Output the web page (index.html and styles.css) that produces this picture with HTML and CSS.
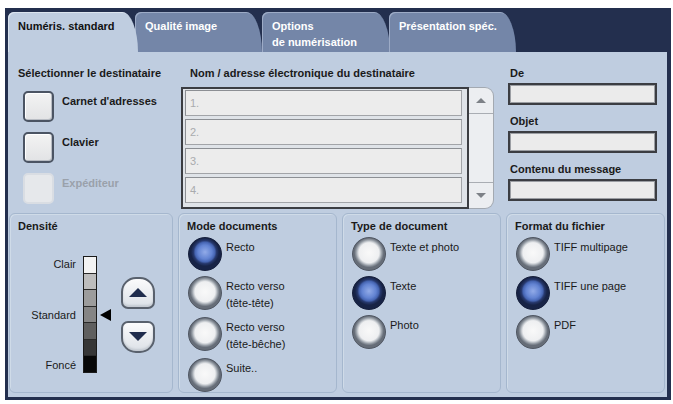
FILE: index.html
```html
<!DOCTYPE html>
<html lang="fr">
	<head>
		<meta charset="UTF-8">
		<title>Numérisation</title>
		<link rel="stylesheet" href="styles.css">
	</head>
	<body>
		<div class="frame">
			<div class="tabs">
				<div class="tab tab-active">Numéris. standard</div>
				<div class="tab tab-2">Qualité image</div>
				<div class="tab tab-3">Options<br>de numérisation</div>
				<div class="tab tab-4">Présentation spéc.</div>
			</div>
			<div class="panel">
				<div class="top">
					<div class="dest-col">
						<div class="label">Sélectionner le destinataire</div>
						<div class="dest-list">
							<div class="dest-btn">
								<span class="square"></span>
								<span class="dest-text">Carnet d'adresses</span>
							</div>
							<div class="dest-btn">
								<span class="square"></span>
								<span class="dest-text">Clavier</span>
							</div>
							<div class="dest-btn disabled">
								<span class="square"></span>
								<span class="dest-text">Expéditeur</span>
							</div>
						</div>
					</div>
					<div class="recip-col">
						<div class="label recip-title">Nom / adresse électronique du destinataire</div>
						<div class="recip-box">
							<div class="list">
								<div class="row">1.</div>
								<div class="row">2.</div>
								<div class="row">3.</div>
								<div class="row">4.</div>
							</div>
							<div class="scroll">
								<div class="scroll-btn"><span class="arr-up"></span></div>
								<div class="scroll-mid"></div>
								<div class="scroll-btn scroll-down"><span class="arr-down"></span></div>
							</div>
						</div>
					</div>
					<div class="mail-col">
						<div class="label field-label">De</div>
						<div class="field"></div>
						<div class="label field-label">Objet</div>
						<div class="field"></div>
						<div class="label field-label">Contenu du message</div>
						<div class="field"></div>
					</div>
				</div>
				<div class="groups">
					<div class="group">
						<div class="label">Densité</div>
						<div class="density">
							<div class="scale-labels">
								<span>Clair</span>
								<span>Standard</span>
								<span>Foncé</span>
							</div>
							<div class="bar">
								<span class="seg s1"></span>
								<span class="seg s2"></span>
								<span class="seg s3"></span>
								<span class="seg s4"></span>
								<span class="seg s5"></span>
								<span class="seg s6"></span>
								<span class="seg s7"></span>
							</div>
							<div class="pointer"></div>
							<div class="steps">
								<div class="step step-up"><span class="tri-up"></span></div>
								<div class="step step-down"><span class="tri-down"></span></div>
							</div>
						</div>
					</div>
					<div class="group">
						<div class="label">Mode documents</div>
						<div class="radio-list">
							<div class="option"><span class="radio on"></span><span class="opt-text">Recto</span></div>
							<div class="option"><span class="radio"></span><span class="opt-text">Recto verso<br>(tête-tête)</span></div>
							<div class="option"><span class="radio"></span><span class="opt-text">Recto verso<br>(tête-bêche)</span></div>
							<div class="option"><span class="radio"></span><span class="opt-text">Suite..</span></div>
						</div>
					</div>
					<div class="group">
						<div class="label">Type de document</div>
						<div class="radio-list">
							<div class="option"><span class="radio"></span><span class="opt-text">Texte et photo</span></div>
							<div class="option"><span class="radio on"></span><span class="opt-text">Texte</span></div>
							<div class="option"><span class="radio"></span><span class="opt-text">Photo</span></div>
						</div>
					</div>
					<div class="group">
						<div class="label">Format du fichier</div>
						<div class="radio-list">
							<div class="option"><span class="radio"></span><span class="opt-text">TIFF multipage</span></div>
							<div class="option"><span class="radio on"></span><span class="opt-text">TIFF une page</span></div>
							<div class="option"><span class="radio"></span><span class="opt-text">PDF</span></div>
						</div>
					</div>
				</div>
			</div>
		</div>
	</body>
</html>
```

FILE: styles.css
```css
body {
	margin: 0;
	background: #fff;
	font-family: "Liberation Sans", Arial, sans-serif;
	font-size: 11px;
	color: #1a1a1a;
}
.frame {
	margin: 8px 0 0 5px;
	width: 666px;
	height: 392px;
	box-sizing: border-box;
	padding: 4px 4px 4px 3px;
	background: #232f4e;
	display: flex;
	flex-direction: column;
}

/* tabs */
.tabs {
	display: flex;
	height: 40px;
}
.tab {
	height: 40px;
	box-sizing: border-box;
	padding: 7px 0 0 10px;
	line-height: 14px;
	font-weight: bold;
	color: #fff;
	background: #7486a8;
	border-radius: 6px 16px 0 0 / 6px 40px 0 0;
	box-shadow: inset 1px 1px 0 #9dabc6;
}
.tab-active {
	position: relative;
	z-index: 2;
	width: 130px;
	color: #111;
	background: #bfcde0;
	box-shadow: inset 1px 1px 0 #dbe4ef;
}
.tab-2 {
	width: 127px;
	margin-left: -3px;
}
.tab-3 {
	width: 128px;
	padding-top: 6px;
	line-height: 16px;
}
.tab-4 {
	width: 127px;
	margin-left: -1px;
}

.panel {
	flex: 1;
	background: #bfcde0;
	display: flex;
	flex-direction: column;
}
.label {
	font-weight: bold;
	line-height: 14px;
	white-space: nowrap;
}

/* top part */
.top {
	display: flex;
	height: 161px;
}
.dest-col {
	width: 173px;
	box-sizing: border-box;
	padding: 14px 0 0 10px;
}
.dest-list {
	margin-top: 11px;
	padding-left: 5px;
	display: flex;
	flex-direction: column;
	gap: 10px;
}
.dest-btn {
	display: flex;
	align-items: flex-start;
	gap: 8px;
}
.square {
	width: 31px;
	height: 31px;
	box-sizing: border-box;
	border: 2px solid #4b5463;
	border-radius: 5px;
	background: linear-gradient(#f3f3f3, #e2e3e5);
	box-shadow: inset -1px -1px 0 #b9bdc4, inset 1px 1px 0 #fff;
}
.dest-text {
	padding-top: 3px;
	line-height: 14px;
	font-weight: bold;
}
.disabled .square {
	border-color: #d9dde3;
	background: #e6e8eb;
	box-shadow: none;
}
.disabled .dest-text {
	color: #9aa1ab;
}

.recip-col {
	width: 313px;
	padding-top: 14px;
}
.recip-title {
	padding-left: 9px;
}
.recip-box {
	margin-top: 7px;
	display: flex;
	height: 122px;
}
.list {
	width: 288px;
	box-sizing: border-box;
	border: 2px solid #3b3d42;
	padding: 1px 5px 4px 2px;
	display: flex;
	flex-direction: column;
	gap: 3px;
	background: #dfe3e8;
}
.row {
	height: 26px;
	box-sizing: border-box;
	border: 1px solid #a2a4a8;
	border-top-color: #8c8f94;
	border-left-color: #8c8f94;
	background: #ececec;
	padding-left: 4px;
	line-height: 24px;
	color: #a9abae;
}
.scroll {
	width: 25px;
	box-sizing: border-box;
	border: 1px solid #a3a9b1;
	border-left: none;
	border-radius: 0 9px 9px 0;
	background: #eceef1;
	display: flex;
	flex-direction: column;
}
.scroll-btn {
	height: 25px;
	display: flex;
	align-items: center;
	justify-content: center;
	border-bottom: 1px solid #a9adb3;
}
.scroll-down {
	border-bottom: none;
	border-top: 1px solid #a9adb3;
}
.scroll-mid {
	flex: 1;
}
.arr-up, .arr-down {
	width: 0;
	height: 0;
	border-left: 5px solid transparent;
	border-right: 5px solid transparent;
}
.arr-up {
	border-bottom: 5px solid #7d8187;
}
.arr-down {
	border-top: 5px solid #7d8187;
}

.mail-col {
	width: 149px;
	margin-left: 14px;
	padding-top: 14px;
	display: flex;
	flex-direction: column;
}
.field-label {
	padding-left: 2px;
	margin-bottom: 3px;
}
.field {
	height: 22px;
	box-sizing: border-box;
	border: 2px solid #3b3d42;
	box-shadow: inset 0 0 0 1px #9b9ea3;
	background: #ebebeb;
	margin-bottom: 9px;
}

/* groups */
.groups {
	flex: 1;
	display: grid;
	grid-template-columns: 164px 159px 159px 159px;
	gap: 5px;
	padding: 0 2px 4px 1px;
}
.group {
	border: 1px solid #a5b7ce;
	border-radius: 6px;
	padding: 5px 0 0 8px;
	box-shadow: inset 1px 1px 0 #cfdbe8;
}

.density {
	display: flex;
	margin-top: 23px;
	height: 117px;
}
.scale-labels {
	width: 58px;
	display: flex;
	flex-direction: column;
	justify-content: space-between;
	align-items: flex-end;
	padding: 1px 0;
	line-height: 14px;
}
.bar {
	width: 14px;
	margin-left: 7px;
	box-sizing: border-box;
	border: 1px solid #1b1b1b;
	display: flex;
	flex-direction: column;
}
.seg {
	flex: 1;
	border-top: 1px solid #2a2a2a;
}
.s1 { border-top: none; background: #f3f3f3; }
.s2 { background: #bdbdbd; }
.s3 { background: #9c9c9c; }
.s4 { background: #858585; }
.s5 { background: #5f5f5f; }
.s6 { background: #363636; }
.s7 { background: #070707; }
.pointer {
	align-self: center;
	margin-left: 3px;
	width: 0;
	height: 0;
	border-top: 6px solid transparent;
	border-bottom: 6px solid transparent;
	border-right: 11px solid #000;
}
.steps {
	margin-left: 10px;
	align-self: center;
	display: flex;
	flex-direction: column;
	gap: 12px;
}
.step {
	width: 34px;
	height: 32px;
	box-sizing: border-box;
	border: 2px solid #59616d;
	background: linear-gradient(#fbfbfc, #dce1e7);
	box-shadow: inset 0 -2px 2px #c4cad2;
	display: flex;
	align-items: center;
	justify-content: center;
}
.step-up {
	border-radius: 15px 15px 7px 7px;
}
.step-down {
	border-radius: 7px 7px 15px 15px;
}
.tri-up, .tri-down {
	width: 0;
	height: 0;
	border-left: 9px solid transparent;
	border-right: 9px solid transparent;
}
.tri-up {
	border-bottom: 9px solid #1f2c4d;
}
.tri-down {
	border-top: 9px solid #1f2c4d;
}

.radio-list {
	margin-top: 4px;
	display: flex;
	flex-direction: column;
	gap: 5px;
}
.option {
	display: flex;
	align-items: flex-start;
	gap: 4px;
}
.radio {
	flex: none;
	margin-left: 1px;
	width: 34px;
	height: 34px;
	box-sizing: border-box;
	border-radius: 50%;
	border: 1px solid #4f5662;
	background: radial-gradient(circle closest-side at 50% 46%, #f9f9f9 0, #eeeff1 68%, #cdd1d6 76%, #939aa3 88%, #666d78 100%);
}
.radio.on {
	border-color: #141d3a;
	background: radial-gradient(circle closest-side at 50% 44%, #92abe8 0, #6283d2 50%, #4665b2 70%, #27396e 82%, #172346 100%);
}
.opt-text {
	padding-top: 2px;
	line-height: 17px;
	white-space: nowrap;
}
```
